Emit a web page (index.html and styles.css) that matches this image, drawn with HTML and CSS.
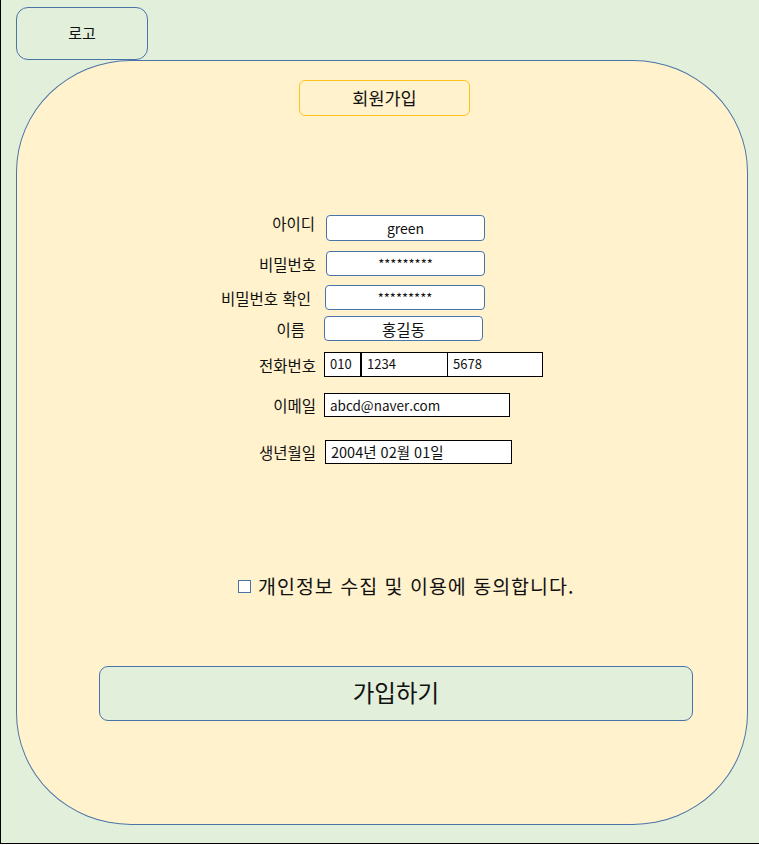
FILE: index.html
```html
<!DOCTYPE html>
<html lang="ko">
<head>
  <meta charset="UTF-8" />
  <meta name="viewport" content="width=device-width, initial-scale=1.0"/>
  <title>회원가입</title>
  <link rel="stylesheet" href="styles.css">
</head>
<body>
  <div class="screen">
    <div class="logo">로고</div>

    <div class="card">
      <div class="title">회원가입</div>

      <div class="form">
        <div class="field field-id">
          <label class="label label-up">아이디</label>
          <div class="box round">green</div>
        </div>
        <div class="field field-pw">
          <label class="label">비밀번호</label>
          <div class="box round">*********</div>
        </div>
        <div class="field field-pw2">
          <label class="label label-confirm">비밀번호 확인</label>
          <div class="box round">*********</div>
        </div>
        <div class="field field-name">
          <label class="label label-name">이름</label>
          <div class="box round">홍길동</div>
        </div>
        <div class="field field-phone">
          <label class="label">전화번호</label>
          <div class="phone">
            <div class="cell cell-a">010</div>
            <div class="cell cell-b">1234</div>
            <div class="cell cell-c">5678</div>
          </div>
        </div>
        <div class="field field-email">
          <label class="label">이메일</label>
          <div class="cell cell-email">abcd@naver.com</div>
        </div>
        <div class="field field-birth">
          <label class="label">생년월일</label>
          <div class="cell cell-birth">2004년 02월 01일</div>
        </div>
      </div>

      <div class="agree">
        <span class="check"></span>
        <span class="agree-text">개인정보 수집 및 이용에 동의합니다.</span>
      </div>

      <button class="submit">가입하기</button>
    </div>
  </div>
</body>
</html>
```

FILE: styles.css
```css
* {
  margin: 0;
  padding: 0;
  box-sizing: border-box;
  font-family: "Noto Sans CJK KR", "Noto Sans", sans-serif;
}
body {
  background: #fff;
  color: #111;
}
.screen {
  width: 759px;
  height: 844px;
  background: #e2efda;
  border-left: 1px solid #000;
  border-bottom: 1px solid #000;
  padding-top: 7px;
  overflow: hidden;
}
.logo {
  width: 132px;
  height: 53px;
  margin-left: 15px;
  border: 1px solid #4a74a8;
  border-radius: 12px;
  display: flex;
  justify-content: center;
  align-items: center;
  font-size: 15px;
  padding-bottom: 3px;
}
.card {
  width: 732px;
  height: 765px;
  margin-left: 15px;
  background: #fff2cc;
  border: 1px solid #4a74a8;
  border-radius: 115px / 112px;
}
.title {
  width: 171px;
  height: 36px;
  margin: 19px 0 0 282px;
  border: 1px solid #ffc21a;
  border-radius: 6px;
  display: flex;
  justify-content: center;
  align-items: center;
  font-size: 17.5px;
  padding-bottom: 2px;
}
.form {
  margin-top: 99px;
}
.field {
  display: flex;
  align-items: center;
  gap: 8px;
}
.label {
  width: 299px;
  text-align: right;
  font-size: 15.5px;
  line-height: 18px;
}
.label-up {
  margin-top: -10px;
  padding-right: 1px;
}
.label-confirm {
  padding-right: 5px;
}
.label-name {
  padding-right: 11px;
}
.box {
  height: 25px;
  border: 1px solid #4a74a8;
  background: #fff;
  display: flex;
  justify-content: center;
  align-items: center;
  font-size: 13px;
}
.round {
  border-radius: 4px;
}
.field-id .box {
  width: 159px;
  height: 26px;
  margin-left: 2px;
  font-size: 14px;
}
.field-pw {
  margin-top: 10px;
}
.field-pw .box {
  width: 159px;
  margin-left: 2px;
}
.field-pw2 {
  margin-top: 9px;
}
.field-pw2 .box {
  width: 160px;
  margin-left: 1px;
}
.field-name {
  margin-top: 6px;
}
.field-name .box {
  width: 159px;
  font-size: 15.5px;
}
.field-phone {
  margin-top: 11px;
}
.field-email {
  margin-top: 16px;
}
.field-birth {
  margin-top: 23px;
}
.phone {
  display: flex;
}
.cell {
  height: 25px;
  border: 1px solid #000;
  background: #fff;
  font-size: 13px;
  line-height: 22px;
  padding-left: 5px;
}
.cell-a {
  width: 38px;
  border-right-width: 2px;
}
.cell-b {
  width: 87px;
  margin-left: -1px;
}
.cell-c {
  width: 96px;
  margin-left: -1px;
}
.cell-email {
  width: 186px;
  height: 24px;
  font-size: 13.5px;
}
.cell-birth {
  width: 187px;
  height: 24px;
  margin-left: 1px;
  font-size: 14.5px;
}
.agree {
  margin-top: 110px;
  padding-left: 221px;
  height: 24px;
  display: flex;
  align-items: center;
  gap: 7px;
}
.check {
  width: 13px;
  height: 13px;
  border: 1px solid #4a74a8;
  background: #fff;
  margin-top: 1px;
}
.agree-text {
  font-size: 19.5px;
  line-height: 24px;
  letter-spacing: 1px;
}
.submit {
  display: block;
  width: 594px;
  height: 55px;
  margin: 68px 0 0 82px;
  background: #e2efda;
  border: 1px solid #4a74a8;
  border-radius: 9px;
  font-size: 23.5px;
  color: #111;
  padding-bottom: 3px;
}
```
